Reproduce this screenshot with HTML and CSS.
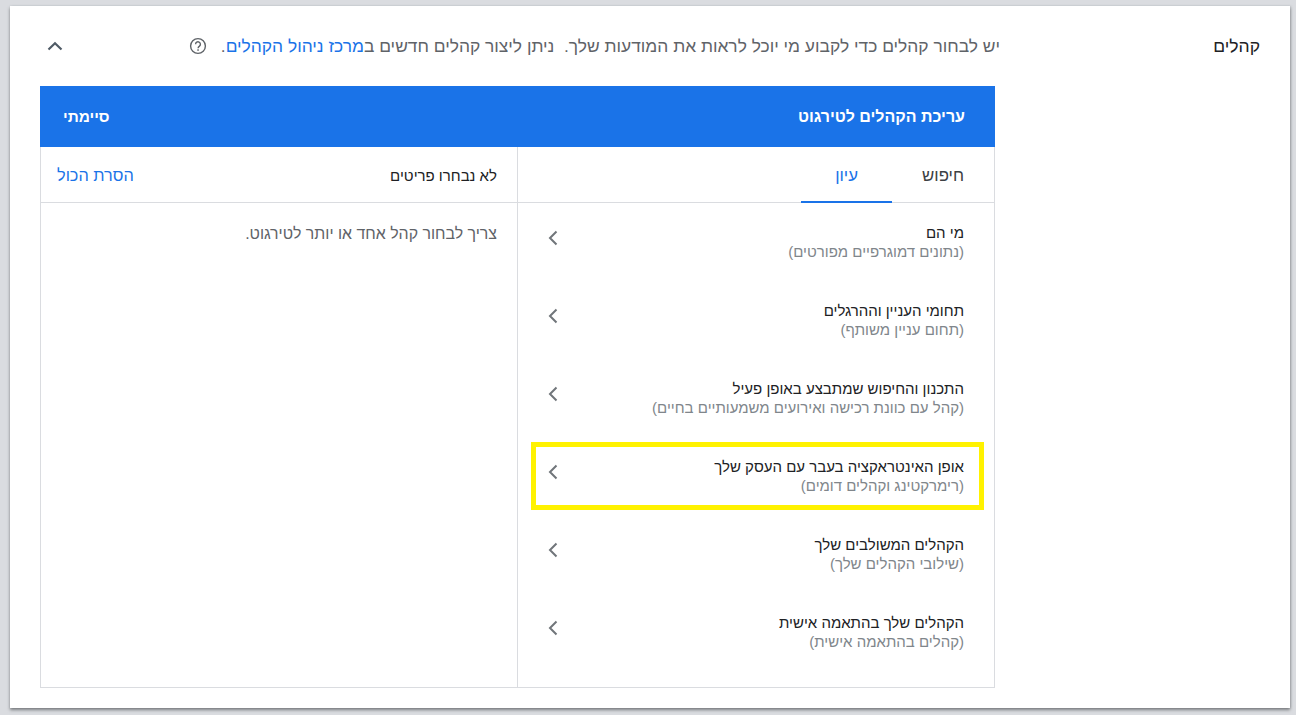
FILE: index.html
```html
<!DOCTYPE html>
<html lang="he" dir="rtl">
<head>
<meta charset="utf-8">
<title>קהלים</title>
<link rel="stylesheet" href="styles.css">
</head>
<body>
<main class="card">
  <h2 class="section-title">קהלים</h2>
  <div class="section-body">
    <div class="intro">
      <p class="intro-text">יש לבחור קהלים כדי לקבוע מי יוכל לראות את המודעות שלך.&nbsp; ניתן ליצור קהלים חדשים ב<a class="link" href="#">מרכז ניהול הקהלים</a>.</p>
      <svg class="help" viewBox="0 0 18 18" width="18" height="18"><circle cx="9" cy="9" r="7.4" fill="none" stroke="#5f6368" stroke-width="1.4"/><path d="M6.6 7.2a2.4 2.4 0 1 1 3.9 1.9c-.9.7-1.4 1.1-1.4 2.2" fill="none" stroke="#5f6368" stroke-width="1.4"/><rect x="8.3" y="12.3" width="1.5" height="1.5" fill="#5f6368"/></svg>
      <svg class="collapse" viewBox="0 0 16 10" width="16" height="10"><path d="M1.5 8.5 8 2.2l6.5 6.3" fill="none" stroke="#4f5b66" stroke-width="2.2"/></svg>
    </div>
    <section class="editor">
      <header class="editor-head">
        <span class="editor-title">עריכת הקהלים לטירגוט</span>
        <span class="editor-done">סיימתי</span>
      </header>
      <div class="panes">
        <div class="pane-browse">
          <nav class="tabs">
            <span class="tab">חיפוש</span>
            <span class="tab tab-active">עיון</span>
          </nav>
          <ul class="rows">
            <li class="row"><div><div class="row-title">מי הם</div><div class="row-sub">(נתונים דמוגרפיים מפורטים)</div></div><svg class="chev" viewBox="0 0 10 16" width="10" height="16"><path d="M8.5 1.5 2 8l6.5 6.5" fill="none" stroke="#70757a" stroke-width="2"/></svg></li>
            <li class="row"><div><div class="row-title">תחומי העניין וההרגלים</div><div class="row-sub">(תחום עניין משותף)</div></div><svg class="chev" viewBox="0 0 10 16" width="10" height="16"><path d="M8.5 1.5 2 8l6.5 6.5" fill="none" stroke="#70757a" stroke-width="2"/></svg></li>
            <li class="row"><div><div class="row-title">התכנון והחיפוש שמתבצע באופן פעיל</div><div class="row-sub">(קהל עם כוונת רכישה ואירועים משמעותיים בחיים)</div></div><svg class="chev" viewBox="0 0 10 16" width="10" height="16"><path d="M8.5 1.5 2 8l6.5 6.5" fill="none" stroke="#70757a" stroke-width="2"/></svg></li>
            <li class="row"><span class="highlight"></span><div><div class="row-title">אופן האינטראקציה בעבר עם העסק שלך</div><div class="row-sub">(רימרקטינג וקהלים דומים)</div></div><svg class="chev" viewBox="0 0 10 16" width="10" height="16"><path d="M8.5 1.5 2 8l6.5 6.5" fill="none" stroke="#70757a" stroke-width="2"/></svg></li>
            <li class="row"><div><div class="row-title">הקהלים המשולבים שלך</div><div class="row-sub">(שילובי הקהלים שלך)</div></div><svg class="chev" viewBox="0 0 10 16" width="10" height="16"><path d="M8.5 1.5 2 8l6.5 6.5" fill="none" stroke="#70757a" stroke-width="2"/></svg></li>
            <li class="row"><div><div class="row-title">הקהלים שלך בהתאמה אישית</div><div class="row-sub">(קהלים בהתאמה אישית)</div></div><svg class="chev" viewBox="0 0 10 16" width="10" height="16"><path d="M8.5 1.5 2 8l6.5 6.5" fill="none" stroke="#70757a" stroke-width="2"/></svg></li>
          </ul>
        </div>
        <div class="pane-selected">
          <div class="selected-head">
            <span>לא נבחרו פריטים</span>
            <a class="link remove" href="#">הסרת הכול</a>
          </div>
          <p class="selected-empty">צריך לבחור קהל אחד או יותר לטירגוט.</p>
        </div>
      </div>
    </section>
  </div>
</main>
</body>
</html>
```
FILE: styles.css
```css
* { box-sizing: border-box; }
html, body { margin: 0; height: 100%; overflow: hidden; }
body {
  background: #dadce0;
  padding: 6px 6px 7px 10px;
  font-family: "Liberation Sans", Arial, sans-serif;
  font-size: 15px;
  color: #202124;
}
.card {
  height: 702px;
  background: #fff;
  display: flex;
  padding-right: 30px;
  box-shadow: 0 2px 3px rgba(60, 64, 67, .6), 1px 0 2px rgba(60, 64, 67, .15);
}
.section-title {
  width: 265px;
  flex: none;
  margin: 0;
  padding-top: 30px;
  font-size: 17.5px;
  line-height: 20px;
  font-weight: 400;
  color: #202124;
}
.section-body { width: 955px; flex: none; }
.intro {
  height: 80px;
  display: flex;
  align-items: flex-start;
  margin-right: -5px;
  padding-top: 30px;
}
.intro-text {
  margin: 0;
  width: 788px;
  flex: none;
  line-height: 20px;
  font-size: 17.4px;
  color: #5f6368;
  white-space: nowrap;
  overflow: hidden;
}
.link { color: #1a73e8; text-decoration: none; }
.help { flex: none; margin: 1px 5px 0 0; }
.collapse { flex: none; margin: 5px 126px 0 0; }
.editor { width: 955px; }
.editor-head {
  height: 61px;
  background: #1a73e8;
  color: #fff;
  font-weight: 700;
  display: flex;
  justify-content: space-between;
  align-items: center;
  padding: 0 30px 0 32px;
}
.editor-title { font-size: 16px; }
.editor-done { font-size: 15.4px; margin-left: -9px; }
.panes {
  height: 541px;
  display: flex;
  border: 1px solid #dadce0;
  border-top: 0;
}
.pane-browse { width: 477px; flex: none; border-left: 1px solid #dadce0; }
.pane-selected { flex: 1; min-width: 0; }
.tabs {
  height: 56px;
  display: flex;
  padding-right: 30px;
  border-bottom: 1px solid #dadce0;
}
.tab {
  font-size: 16.8px;
  line-height: 20px;
  padding-top: 19px;
  color: #3c4043;
  height: 56px;
}
.tab-active {
  width: 91px;
  margin-right: 30px;
  text-align: center;
  color: #1a73e8;
  border-bottom: 2px solid #1a73e8;
}
.rows { list-style: none; margin: 0; padding: 0; }
.row {
  position: relative;
  height: 78px;
  padding: 20px 30px 0 30px;
  display: flex;
  justify-content: space-between;
}
.row-title { font-size: 15px; line-height: 20px; color: #202124; }
.row-sub { font-size: 15px; line-height: 18px; color: #80868b; }
.chev { flex: none; margin-top: 7px; }
.highlight {
  position: absolute;
  top: 5px;
  right: 10px;
  width: 453px;
  height: 68px;
  border: 5px solid #fff200;
}
.selected-head {
  height: 56px;
  display: flex;
  justify-content: space-between;
  align-items: center;
  padding: 2px 20px 0 16px;
  border-bottom: 1px solid #dadce0;
  color: #202124;
}
.remove { font-size: 16.3px; }
.selected-empty {
  margin: 0;
  padding: 21px 20px 0 0;
  line-height: 20px;
  font-size: 15.9px;
  color: #5f6368;
}
```
